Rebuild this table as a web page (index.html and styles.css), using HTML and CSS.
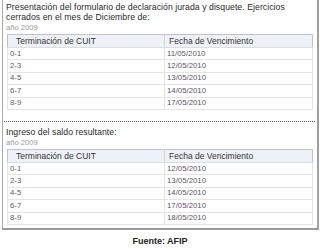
FILE: index.html
```html
<!DOCTYPE html>
<html>
<head>
<meta charset="utf-8">
<link rel="stylesheet" href="styles.css">
</head>
<body>
<div class="box">
  <div class="section">
    <p class="title">Presentación del formulario de declaración jurada y disquete. Ejercicios cerrados en el mes de Diciembre de:</p>
    <p class="year">año 2009</p>
    <table class="grid">
      <tr><th>Terminación de CUIT</th><th>Fecha de Vencimiento</th></tr>
      <tr><td>0-1</td><td class="d">11/05/2010</td></tr>
      <tr><td>2-3</td><td class="d">12/05/2010</td></tr>
      <tr><td>4-5</td><td class="d">13/05/2010</td></tr>
      <tr><td>6-7</td><td class="d">14/05/2010</td></tr>
      <tr><td>8-9</td><td class="d">17/05/2010</td></tr>
    </table>
  </div>
  <div class="sep"></div>
  <div class="section second">
    <p class="title">Ingreso del saldo resultante:</p>
    <p class="year">año 2009</p>
    <table class="grid">
      <tr><th>Terminación de CUIT</th><th>Fecha de Vencimiento</th></tr>
      <tr><td>0-1</td><td class="d">12/05/2010</td></tr>
      <tr><td>2-3</td><td class="d">13/05/2010</td></tr>
      <tr><td>4-5</td><td class="d">14/05/2010</td></tr>
      <tr><td>6-7</td><td class="d">17/05/2010</td></tr>
      <tr><td>8-9</td><td class="d">18/05/2010</td></tr>
    </table>
  </div>
</div>
<p class="source">Fuente: AFIP</p>
</body>
</html>
```
FILE: styles.css
```css
html, body {
  margin: 0;
  padding: 0;
  background: #ffffff;
}
body {
  font-family: "Liberation Sans", Arial, sans-serif;
  width: 320px;
  height: 249px;
  overflow: hidden;
}
.box {
  margin-left: 2px;
  width: 311px;
  border-left: 1px solid #a8a8a8;
  border-right: 2px solid #a0a0a0;
  border-bottom: 2px solid #9a9a9a;
  padding: 2px 0 3px 3px;
  box-sizing: content-box;
}
.title {
  margin: 0;
  font-size: 8.7px;
  line-height: 10px;
  color: #2a2a2a;
  padding-right: 20px;
  letter-spacing: 0.05px;
}
.year {
  margin: 1px 0 1px;
  font-size: 7.6px;
  line-height: 10px;
  color: #999;
}
.grid {
  width: 306px;
  margin-left: 1px;
  border-collapse: collapse;
  border: 1px solid #b9c3d2;
  font-size: 7.8px;
  color: #606060;
}
.grid th {
  text-align: left;
  font-weight: normal;
  color: #333;
  background: #eef2f8;
  font-size: 8.5px;
  height: 12px;
  padding: 0 0 0 8px;
  border-bottom: 1px solid #d8dde6;
}
.grid th + th {
  padding-left: 4px;
  border-left: 1px solid #d0d6e0;
}
.grid td {
  height: 11.4px;
  padding: 0 0 0 2px;
  border: 1px solid #e4e4e4;
  line-height: 10px;
}
.grid td.d {
  color: #5e5366;
  width: 145px;
}
.sep {
  margin: 11px 0 5px -2px;
  width: 311px;
  border-top: 1px dotted #5a5a80;
}
.second .title {
  padding-right: 0;
}
.source {
  margin: 6px 0 0;
  text-align: center;
  font-size: 9px;
  font-weight: bold;
  color: #222;
}
```
